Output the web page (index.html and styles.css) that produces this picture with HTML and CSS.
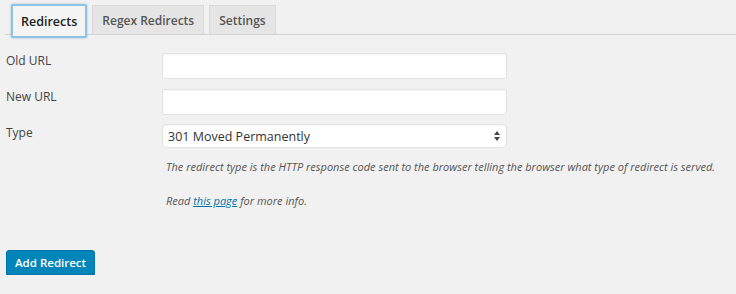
FILE: index.html
```html
<!DOCTYPE html>
<html lang="en">
<head>
  <meta charset="UTF-8" />
  <title>Redirection</title>
  <link rel="stylesheet" href="styles.css">
</head>
<body>
  <nav class="tabs">
    <a class="tab active" href="#">Redirects</a>
    <a class="tab" href="#">Regex Redirects</a>
    <a class="tab" href="#">Settings</a>
  </nav>

  <form class="redirect-form">
    <div class="row">
      <label for="oldUrl">Old URL</label>
      <input type="text" id="oldUrl">
    </div>
    <div class="row">
      <label for="newUrl">New URL</label>
      <input type="text" id="newUrl">
    </div>
    <div class="row">
      <label for="type">Type</label>
      <div class="select">
        <span>301 Moved Permanently</span>
        <svg width="6" height="10" viewBox="0 0 6 10"><path d="M3 0L6 4H0z M3 10L0 6H6z" fill="#444"/></svg>
      </div>
    </div>
    <p class="desc">The redirect type is the HTTP response code sent to the browser telling the browser what type of redirect is served.</p>
    <p class="desc">Read <a href="#">this page</a> for more info.</p>

    <button type="button" class="btn-primary">Add Redirect</button>
  </form>
</body>
</html>
```

FILE: styles.css
```css
body {
  margin: 0;
  background: #f1f1f1;
  color: #444;
  font-family: 'Open Sans', sans-serif;
  font-size: 12px;
}

.tabs {
  display: flex;
  gap: 5px;
  margin: 0 0 0 5px;
  padding: 4px 0 0 6px;
  border-bottom: 1px solid #d4d4d4;
  height: 30px;
}

.tab {
  display: flex;
  align-items: center;
  padding: 0 9px;
  margin-top: 1px;
  background: #e5e5e5;
  border: 1px solid #d8d8d8;
  border-bottom: none;
  color: #555;
  font-weight: 600;
  font-size: 12px;
  text-decoration: none;
}

.tab.active {
  margin-top: 0;
  height: 30px;
  background: #f4f4f4;
  color: #222;
  border: 2px solid #8fc3e3;
  border-radius: 2px;
  padding: 0 8px;
  font-size: 12.5px;
  box-shadow: 0 0 2px rgba(30, 140, 190, 0.5);
}

.redirect-form {
  padding: 18px 6px 0;
}

.row {
  display: flex;
  align-items: flex-start;
  margin-bottom: 10px;
}

.row label {
  width: 156px;
  line-height: 16px;
}

.row input,
.select {
  box-sizing: border-box;
  width: 345px;
  height: 26px;
  margin: 0;
  background: #fff;
  border: 1px solid #e4e4e4;
  border-radius: 2px;
  box-shadow: inset 0 1px 2px rgba(0, 0, 0, 0.05);
  font-family: inherit;
}

.select {
  display: flex;
  align-items: center;
  justify-content: space-between;
  height: 24px;
  margin-top: -1px;
  padding: 0 6px 0 5px;
  border-radius: 4px;
  color: #333;
  font-size: 12.5px;
}

.desc {
  margin: 0 0 0 160px;
  font-style: italic;
  color: #555;
  font-size: 11px;
  line-height: 17px;
  white-space: nowrap;
}

.desc + .desc {
  margin-top: 17px;
}

.desc a {
  color: #0073aa;
}

.btn-primary {
  margin-top: 41px;
  height: 25px;
  padding: 0 8px;
  background: #0085ba;
  border: 1px solid #0073aa;
  border-radius: 3px;
  color: #fff;
  font-family: inherit;
  font-weight: 600;
  font-size: 11.5px;
  box-shadow: 0 1px 0 #006799;
}
```
